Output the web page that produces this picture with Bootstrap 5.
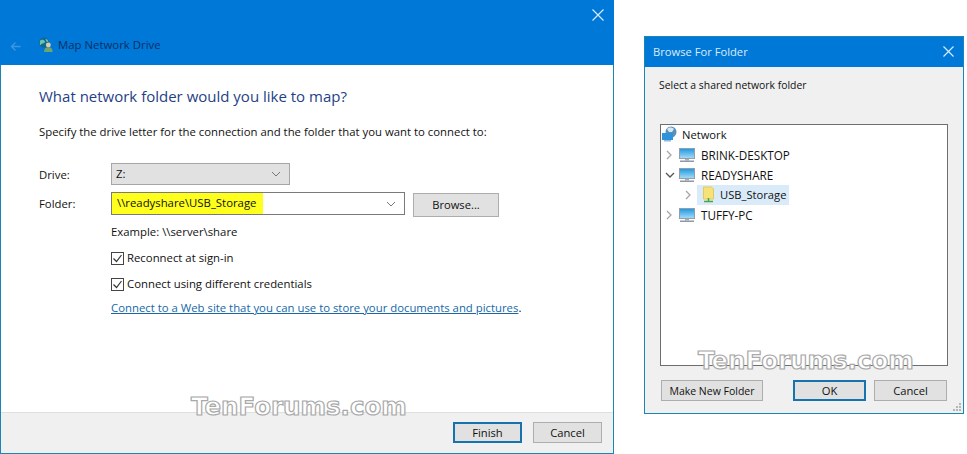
<!DOCTYPE html>
<html lang="en">
<head>
    <meta charset="UTF-8">
    <title>Map Network Drive</title>
    <link href="https://cdn.jsdelivr.net/npm/bootstrap@5.3.0/dist/css/bootstrap.min.css" rel="stylesheet">
    <style>
        html, body { height: 454px; overflow: hidden; }
        body {
            background: #fff;
            color: #111;
            font-family: "Open Sans", "Liberation Sans", sans-serif;
            font-size: 11.35px;
            line-height: 16px;
            position: relative;
        }
        .map-win {
            width: 614px;
            height: 454px;
            border: 1px solid #1a86b8;
            border-top: 0;
            background: #fff;
        }
        .map-title {
            height: 65px;
            margin: 0 -1px;
            background: #0078d7;
            padding: 37px 0 0 10px;
            position: relative;
        }
        .map-title-text { color: #0b2f66; font-size: 11.4px; margin-left: 4px; }
        .win-close { position: absolute; right: 10px; top: 9px; }
        .map-body { padding: 21px 0 0 38px; }
        .map-heading { color: #1f3f86; font-size: 15px; line-height: 20px; height: 20px; }
        .map-intro { margin-top: 18px; height: 16px; }
        .field-row { display: flex; align-items: flex-start; }
        .field-label { width: 72px; padding-top: 4px; }
        .drive-box {
            width: 179px; height: 22px;
            background: #e1e1e1;
            border: 1px solid #a6a6a6;
            padding: 0 8px 0 4px;
        }
        .folder-box {
            width: 294px; height: 23px;
            background: #fff;
            border: 1px solid #7a7a7a;
            padding: 0 8px 0 0;
        }
        .folder-mark {
            background: #ffff1e;
            width: 151px; height: 21px;
            padding-left: 5px;
            line-height: 20px;
        }
        .win-btn {
            --bs-btn-padding-x: 0;
            --bs-btn-padding-y: 0;
            --bs-btn-font-size: 11.2px;
            --bs-btn-border-radius: 0;
            --bs-btn-line-height: 18px;
            --bs-btn-color: #111;
            --bs-btn-bg: #e1e1e1;
            --bs-btn-border-color: #adadad;
            height: 22px;
        }
        .win-btn-main { border: 2px solid #1673ad; background: #e1e1e1; }
        .browse-btn { width: 86px; height: 24px; margin-left: 8px; margin-top: 1px; }
        .opt-col { margin-left: 72px; }
        .opt-example { margin-top: 7px; }
        .opt-check { display: flex; align-items: center; gap: 3px; margin-top: 10px; height: 16px; }
        .opt-link { color: #1668a8; text-decoration: underline; }
        .opt-line { margin-top: 8px; }
        .map-foot {
            position: absolute;
            left: 1px; top: 412px;
            width: 612px; height: 41px;
            background: #f0f0f0;
            border-top: 1px solid #dfdfdf;
            padding: 9px 11px 0 0;
            gap: 11px;
        }
        .foot-btn { width: 69px; height: 21px; }
        .browse-win {
            position: absolute;
            left: 644px; top: 36px;
            width: 320px; height: 378px;
            background: #f0f0f0;
            border: 1px solid #1a86b8;
            font-size: 11.2px;
        }
        .browse-title {
            height: 30px;
            background: #0078d7;
            color: #d9ecfa;
            padding: 7px 0 0 8px;
            position: relative;
        }
        .browse-close { position: absolute; right: 9px; top: 9px; }
        .browse-prompt { margin: 10px 0 0 14px; height: 16px; font-size: 10.4px; }
        .tree-box {
            width: 288px; height: 242px;
            margin: 31px 0 0 15px;
            background: #fff;
            border: 1px solid #6e6e6e;
        }
        .tree-row { display: flex; align-items: center; height: 20px; white-space: nowrap; }
        .tree-row:first-child { height: 19.5px; }
        .tree-caps { font-size: 11.7px; margin-left: 2px; }
        .tree-arrow { width: 18px; padding-left: 4px; flex: none; display: flex; }
        .tree-pick { background: #d9ebf9; height: 20px; padding-right: 3px; display: flex; align-items: center; }
        .tree-usb { margin-left: 3px; }
        .browse-foot { margin: 14px 0 0 16px; }
        .new-btn { width: 102px; height: 21px; --bs-btn-font-size: 10.5px; }
        .ok-btn { width: 73px; height: 21px; margin-left: 30px; }
        .esc-btn { width: 73px; height: 21px; margin-left: 8px; }
        .grip { position: absolute; right: 1px; bottom: 1px; }
        .wm-text {
            position: absolute;
            font-family: "DejaVu Sans", sans-serif;
            font-weight: 700;
            font-size: 24px;
            line-height: 26px;
            color: #fff;
            -webkit-text-stroke: 1.2px #a9a9a9;
            white-space: nowrap;
            transform: scaleX(1.02);
            transform-origin: left;
        }
        .wm-left { left: 191px; top: 394px; }
        .wm-right { left: 698px; top: 348px; }
    </style>
</head>
<body>
    <svg width="0" height="0" class="position-absolute">
        <defs>
            <linearGradient id="pc-screen" x1="0" y1="0" x2="0" y2="1">
                <stop offset="0" stop-color="#1c97e2"/>
                <stop offset="1" stop-color="#a9dcf7"/>
            </linearGradient>
            <symbol id="pc" viewBox="0 0 16 16">
                <rect x=".5" y="1.5" width="15" height="10" fill="url(#pc-screen)" stroke="#93a0aa"/>
                <rect x="6" y="12" width="4" height="1.500" fill="#a5b0b8"/>
                <rect x="1" y="13.500" width="14" height="1.500" fill="#8d9aa5"/>
            </symbol>
            <symbol id="chev-r" viewBox="0 0 8 10">
                <path d="M2 1l4 4-4 4" fill="none" stroke="#a6a6a6" stroke-width="1.3"/>
            </symbol>
            <symbol id="chev-d" viewBox="0 0 10 8">
                <path d="M1 2l4 4 4-4" fill="none" stroke="#555" stroke-width="1.3"/>
            </symbol>
            <symbol id="chev-c" viewBox="0 0 10 8">
                <path d="M1 2l4 4 4-4" fill="none" stroke="#777" stroke-width="1"/>
            </symbol>
            <symbol id="chk" viewBox="0 0 13 13">
                <rect x=".5" y=".5" width="12" height="12" fill="#fff" stroke="#444"/>
                <path d="M2.500 6.500l3 3 5-6.500" fill="none" stroke="#333" stroke-width="1.2"/>
            </symbol>
        </defs>
    </svg>

    <div class="map-win">
        <div class="map-title d-flex align-items-start">
            <svg width="11" height="11" viewBox="0 0 11 11" class="mt-1"><path d="M10.500 5.500H1.500M5.500 1.500L1.500 5.500l4 4" fill="none" stroke="#3c97e0" stroke-width="1.3"/></svg>
            <svg width="16" height="16" viewBox="0 0 17 17" style="margin-left:17px">
                <circle cx="6.500" cy="6" r="5.500" fill="#14688f"/>
                <path d="M2 4c2-2 4-1 5 0s0 3-2 3-2 3-3 1zM8 2c2 0 3 2 3 3l-2 0z" fill="#63c7b0"/>
                <circle cx="11" cy="8.500" r="2.600" fill="#dccbaa"/>
                <path d="M6.500 16c0-4 2-5 4.500-5s4.500 1 4.500 5z" fill="#6ea56f"/>
            </svg>
            <span class="map-title-text">Map Network Drive</span>
            <svg class="win-close" width="12" height="12" viewBox="0 0 12 12"><path d="M.5.500l11 11M11.500.500l-11 11" stroke="#dcefff" stroke-width="1.1"/></svg>
        </div>
        <div class="map-body">
            <div class="map-heading">What network folder would you like to map?</div>
            <div class="map-intro">Specify the drive letter for the connection and the folder that you want to connect to:</div>

            <div class="field-row" style="margin-top:23px">
                <div class="field-label">Drive:</div>
                <div class="drive-box d-flex align-items-center justify-content-between">
                    <span>Z:</span>
                    <svg width="10" height="8"><use href="#chev-c"/></svg>
                </div>
            </div>
            <div class="field-row" style="margin-top:7px">
                <div class="field-label">Folder:</div>
                <div class="folder-box d-flex align-items-center justify-content-between">
                    <div class="folder-mark">\\readyshare\USB_Storage</div>
                    <svg width="10" height="8"><use href="#chev-c"/></svg>
                </div>
                <button type="button" class="btn win-btn browse-btn">Browse...</button>
            </div>

            <div class="opt-col">
                <div class="opt-example">Example: \\server\share</div>
                <div class="opt-check"><svg width="13" height="13"><use href="#chk"/></svg><span>Reconnect at sign-in</span></div>
                <div class="opt-check"><svg width="13" height="13"><use href="#chk"/></svg><span>Connect using different credentials</span></div>
                <div class="opt-line"><a href="#" class="opt-link">Connect to a Web site that you can use to store your documents and pictures</a>.</div>
            </div>
        </div>
        <div class="map-foot d-flex justify-content-end">
            <button type="button" class="btn win-btn win-btn-main foot-btn">Finish</button>
            <button type="button" class="btn win-btn foot-btn">Cancel</button>
        </div>
    </div>

    <div class="browse-win">
        <div class="browse-title">
            Browse For Folder
            <svg class="browse-close" width="11" height="11" viewBox="0 0 11 11"><path d="M.5.500l10 10M10.500.500l-10 10" stroke="#dcefff" stroke-width="1.1"/></svg>
        </div>
        <div class="browse-prompt">Select a shared network folder</div>
        <div class="tree-box">
            <div class="tree-row">
                <svg width="17" height="17" viewBox="0 0 17 17" class="me-1">
                    <circle cx="10" cy="6" r="5.500" fill="#5b8fb8"/>
                    <path d="M6 3c2-2 5-2 7 0l-2 3H8z" fill="#d5e8f5"/>
                    <rect x="1" y="7" width="11" height="7" fill="#2d93dc"/>
                    <rect x="3" y="14" width="7" height="1.500" fill="#8dbce0"/>
                </svg>
                <span>Network</span>
            </div>
            <div class="tree-row">
                <span class="tree-arrow"><svg width="8" height="10"><use href="#chev-r"/></svg></span>
                <svg width="16" height="16" class="me-1"><use href="#pc"/></svg>
                <span class="tree-caps">BRINK-DESKTOP</span>
            </div>
            <div class="tree-row">
                <span class="tree-arrow"><svg width="10" height="8"><use href="#chev-d"/></svg></span>
                <svg width="16" height="16" class="me-1"><use href="#pc"/></svg>
                <span class="tree-caps">READYSHARE</span>
            </div>
            <div class="tree-row">
                <span class="tree-arrow" style="width:36px;padding-left:23px"><svg width="8" height="10"><use href="#chev-r"/></svg></span>
                <div class="tree-pick">
                    <svg width="16" height="17" viewBox="0 0 16 17" class="ms-1">
                        <path d="M2.500 1h8l2 2v10h-10z" fill="#f7e27a" stroke="#e3c95a"/>
                        <path d="M7.500 12v3M3 15.500h9" stroke="#4ca63f" stroke-width="1.500"/>
                    </svg>
                    <span class="tree-usb">USB_Storage</span>
                </div>
            </div>
            <div class="tree-row">
                <span class="tree-arrow"><svg width="8" height="10"><use href="#chev-r"/></svg></span>
                <svg width="16" height="16" class="me-1"><use href="#pc"/></svg>
                <span class="tree-caps">TUFFY-PC</span>
            </div>
        </div>
        <div class="browse-foot d-flex">
            <button type="button" class="btn win-btn new-btn">Make New Folder</button>
            <button type="button" class="btn win-btn win-btn-main ok-btn">OK</button>
            <button type="button" class="btn win-btn esc-btn">Cancel</button>
        </div>
        <svg class="grip" width="10" height="10" viewBox="0 0 10 10" fill="#b5b5b5">
            <rect x="7" y="1" width="2" height="2"/><rect x="4" y="4" width="2" height="2"/><rect x="7" y="4" width="2" height="2"/>
            <rect x="1" y="7" width="2" height="2"/><rect x="4" y="7" width="2" height="2"/><rect x="7" y="7" width="2" height="2"/>
        </svg>
    </div>

    <div class="wm-text wm-left">TenForums.com</div>
    <div class="wm-text wm-right">TenForums.com</div>

    <script src="https://cdn.jsdelivr.net/npm/bootstrap@5.3.0/dist/js/bootstrap.bundle.min.js"></script>
</body>
</html>
